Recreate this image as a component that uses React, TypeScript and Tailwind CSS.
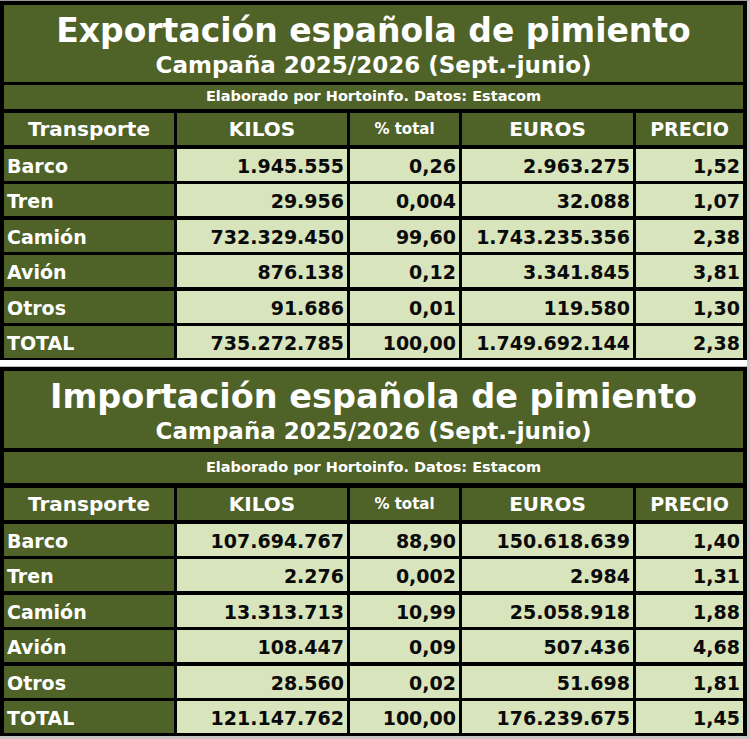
import React from "react";

type Row = [string, string, string, string, string];

const exportRows: Row[] = [
  ["Barco", "1.945.555", "0,26", "2.963.275", "1,52"],
  ["Tren", "29.956", "0,004", "32.088", "1,07"],
  ["Camión", "732.329.450", "99,60", "1.743.235.356", "2,38"],
  ["Avión", "876.138", "0,12", "3.341.845", "3,81"],
  ["Otros", "91.686", "0,01", "119.580", "1,30"],
  ["TOTAL", "735.272.785", "100,00", "1.749.692.144", "2,38"],
];

const importRows: Row[] = [
  ["Barco", "107.694.767", "88,90", "150.618.639", "1,40"],
  ["Tren", "2.276", "0,002", "2.984", "1,31"],
  ["Camión", "13.313.713", "10,99", "25.058.918", "1,88"],
  ["Avión", "108.447", "0,09", "507.436", "4,68"],
  ["Otros", "28.560", "0,02", "51.698", "1,81"],
  ["TOTAL", "121.147.762", "100,00", "176.239.675", "1,45"],
];

function Table({
  title,
  titleCls,
  rows,
  subCls,
  gridCls,
  wrapCls,
}: {
  title: string;
  titleCls: string;
  rows: Row[];
  subCls: string;
  gridCls: string;
  wrapCls: string;
}) {
  const head = "h-[32px] bg-[#4f6228] text-white font-bold flex items-center justify-center";
  return (
    <div className={`bg-black px-[4px] pt-[4px] flex flex-col ${wrapCls}`}>
      <div className="h-[77px] bg-[#4f6228] flex flex-col items-center pt-[6px] text-white">
        <div className={`${titleCls} leading-[40px] font-bold`}>{title}</div>
        <div className="text-[23px] leading-[28px] font-bold">Campaña 2025/2026 (Sept.-junio)</div>
      </div>
      <div
        className={`${subCls} bg-[#4f6228] flex items-center justify-center text-white text-[14.5px] font-bold`}
      >
        Elaborado por Hortoinfo. Datos: Estacom
      </div>
      <div className={`${gridCls} grid grid-cols-[170px_170px_109px_171px_107px] gap-x-[3px] gap-y-[3.5px]`}>
        <div className={`${head} text-[20px]`}>Transporte</div>
        <div className={`${head} text-[20px]`}>KILOS</div>
        <div className={`${head} text-[15px]`}>% total</div>
        <div className={`${head} text-[20px]`}>EUROS</div>
        <div className={`${head} text-[19px]`}>PRECIO</div>
        {rows.map((r) => (
          <React.Fragment key={r[0]}>
            <div className="h-[32px] bg-[#4f6228] text-white text-[19px] font-bold flex items-center pl-[3px] pt-[3px]">
              {r[0]}
            </div>
            {r.slice(1).map((v, i) => (
              <div
                key={i}
                className="h-[32px] bg-[#d8e4bc] text-[#0a0a0a] text-[19px] font-bold flex items-center justify-end pr-[3px] pt-[3px]"
              >
                {v}
              </div>
            ))}
          </React.Fragment>
        ))}
      </div>
    </div>
  );
}

export default function App() {
  return (
    <div
      className="w-[750px] h-[739px] bg-white border-t border-t-[#9a9a9a] border-r-[3px] border-r-[#c8c8c8] overflow-hidden"
      style={{ fontFamily: '"DejaVu Sans", Verdana, sans-serif' }}
    >
      <Table
        title="Exportación española de pimiento"
        titleCls="text-[33px]"
        rows={exportRows}
        subCls="mt-[3px] h-[24px]"
        gridCls="mt-[4px]"
        wrapCls="pb-[2px]"
      />
      <div className="h-[7px] border-b border-b-[#bdbdbd]" />
      <Table
        title="Importación española de pimiento"
        titleCls="text-[33.5px]"
        rows={importRows}
        subCls="mt-[4px] h-[31px]"
        gridCls="mt-[5px]"
        wrapCls="pb-[3px]"
      />
      <div className="h-[4px] bg-[#c4c4c4]" />
    </div>
  );
}
